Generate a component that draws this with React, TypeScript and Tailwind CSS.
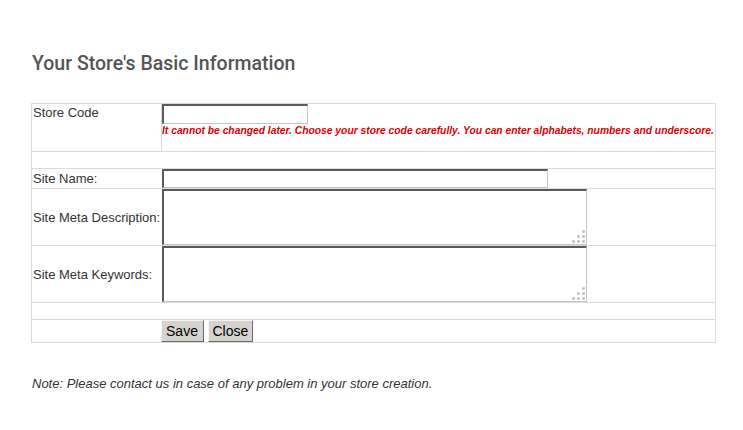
import React from 'react';

const inputBox =
  'block bg-white border-t-2 border-l-2 border-r border-b border-t-[#5a5a5a] border-l-[#5a5a5a] border-r-[#c4c4c4] border-b-[#c4c4c4] outline-none';

// resize grip drawn as dots, like the old browser textarea
function Grip() {
  return (
    <svg className="absolute right-[2px] bottom-[2px]" width="14" height="14" viewBox="0 0 14 14">
      <rect x="11" y="1" width="3" height="3" rx="1" fill="#c8c8c8" />
      <rect x="6" y="6" width="3" height="3" rx="1" fill="#c8c8c8" />
      <rect x="11" y="6" width="3" height="3" rx="1" fill="#c8c8c8" />
      <rect x="1" y="11" width="3" height="3" rx="1" fill="#c8c8c8" />
      <rect x="6" y="11" width="3" height="3" rx="1" fill="#c8c8c8" />
      <rect x="11" y="11" width="3" height="3" rx="1" fill="#c8c8c8" />
    </svg>
  );
}

function Area() {
  return (
    <div className="relative w-[425px] h-[56px]">
      <textarea className={`${inputBox} w-full h-full resize-none`} />
      <Grip />
    </div>
  );
}

const btn =
  'h-[22px] px-[4px] bg-[#d6d3ce] border border-t-[#f4f4f4] border-l-[#f4f4f4] border-r-[#6b6b6b] border-b-[#6b6b6b] text-[14px] leading-none text-black';

export default function App() {
  const label = 'text-[13px] leading-[15px] text-[#333] px-[1px] w-[130px] whitespace-nowrap';
  return (
    <div
      className="w-[743px] h-[430px] bg-white pt-[51px] pl-[31px]"
      style={{ fontFamily: '"Liberation Sans", Arial, sans-serif' }}
    >
      {/* 标题 */}
      <h2
        className="pl-[1px] text-[19.5px] leading-[25px] font-medium text-[#555]"
        style={{ fontFamily: 'Roboto, "Open Sans", sans-serif' }}
      >
        Your Store's Basic Information
      </h2>

      <table className="mt-[27px] w-[685px] border border-[#dcdcdc] border-collapse">
        <tbody>
          <tr className="h-[48px] border-b border-[#dcdcdc]">
            <td className={`${label} align-top pt-[1px]`}>Store Code</td>
            <td className="align-top border-l border-[#dcdcdc] p-0">
              <input className={`${inputBox} w-[146px] h-[20px]`} />
              <div className="mt-[1px] text-[10.3px] font-bold italic text-[#e00000] leading-[12px] whitespace-nowrap">
                It cannot be changed later. Choose your store code carefully. You can enter alphabets, numbers and underscore.
              </div>
            </td>
          </tr>
          <tr className="h-[17px] border-b border-[#dcdcdc]">
            <td colSpan={2}></td>
          </tr>
          <tr className="h-[20px] border-b border-[#dcdcdc]">
            <td className={label}>Site Name:</td>
            <td className="p-0">
              <input className={`${inputBox} w-[386px] h-[19px]`} />
            </td>
          </tr>
          <tr className="h-[57px] border-b border-[#dcdcdc]">
            <td className={label}>Site Meta Description:</td>
            <td className="p-0">
              <Area />
            </td>
          </tr>
          <tr className="h-[57px] border-b border-[#dcdcdc]">
            <td className={label}>Site Meta Keywords:</td>
            <td className="p-0">
              <Area />
            </td>
          </tr>
          <tr className="h-[17px] border-b border-[#dcdcdc]">
            <td colSpan={2}></td>
          </tr>
          <tr className="h-[23px]">
            <td className={label}></td>
            <td className="p-0">
              <div className="flex gap-[4px] -ml-[1px]">
                <button className={`${btn} w-[43px]`}>Save</button>
                <button className={`${btn} w-[45px]`}>Close</button>
              </div>
            </td>
          </tr>
        </tbody>
      </table>

      <p className="mt-[33px] pl-[1px] text-[13px] leading-[16px] italic text-[#333]">
        Note: Please contact us in case of any problem in your store creation.
      </p>
    </div>
  );
}
